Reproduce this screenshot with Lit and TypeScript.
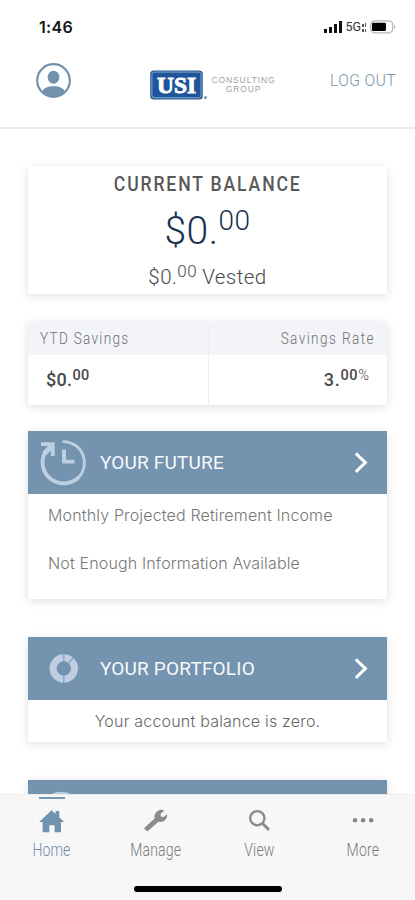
import { LitElement, html, css, svg } from "lit";
import { customElement, property } from "lit/decorators.js";

const chevron = html`<svg class="chevron" viewBox="0 0 14 22" width="14" height="22">
  <path d="M1.8 1.3 L11.4 10.6 L1.8 19.9" fill="none" stroke="#fff" stroke-width="3" />
</svg>`;

const tabIcons: Record<string, unknown> = {
  Home: svg`<path d="M12.5 1.2 L16.5 4.9 V2 H20.3 V8.4 L25.2 13 H22 V23.2 H15.6 V16.3 H10.3 V23.2 H3.6 V13 H.2 Z" fill="#7193b0"/>`,
  Manage: svg`<path d="M4.4 22.6 L1 19.3 L11.6 9.6 C10.7 5.2 14 .9 18.6 .8 C19.8 .8 20.7 1.1 21.3 1.5 L17.5 4.9 L17.9 7.6 L20.6 8.1 L24.1 5.2 C24.7 9.9 20.7 13.8 15.3 12.8 Z" fill="#8b8b8b"/>`,
  View: svg`<circle cx="10.3" cy="9.2" r="7.1" fill="none" stroke="#8b8b8b" stroke-width="2.4"/><path d="M15.3 14.2 L22 20.9" stroke="#8b8b8b" stroke-width="2.9"/>`,
  More: svg`<circle cx="4" cy="11.3" r="2.2" fill="#858585"/><circle cx="12.1" cy="11.3" r="2.2" fill="#858585"/><circle cx="20.2" cy="11.3" r="2.2" fill="#858585"/>`,
};

@customElement("info-panel")
class InfoPanel extends LitElement {
  @property() heading = "";
  static styles = css`
    :host { display: block; background: #fff; box-shadow: 0 2px 9px rgba(0, 0, 0, 0.13); }
    .bar { height: 63px; display: flex; align-items: center; background: #7493ae; color: #f7f9fb; padding-right: 19px; }
    .icon { width: 72px; height: 63px; }
    .title { flex: 1; font: 400 19px/24px Roboto, sans-serif; letter-spacing: 0.18px; white-space: nowrap; }
    .chevron { display: block; }
  `;
  render() {
    return html`<div class="bar">
        <div class="icon"><slot name="icon"></slot></div>
        <div class="title">${this.heading}</div>
        ${this.heading ? chevron : ""}
      </div>
      <slot></slot>`;
  }
}

@customElement("app-root")
class AppRoot extends LitElement {
  static styles = css`
    :host { display: flex; flex-direction: column; height: 900px; overflow: hidden; background: #fff; font-family: Roboto, "Liberation Sans", sans-serif; color: #606060; }
    * { box-sizing: border-box; }
    svg { display: block; }
    .text { display: inline-block; white-space: nowrap; }
    .left { transform-origin: left; }
    .right { transform-origin: right; }
    .status { height: 54px; flex: none; display: flex; justify-content: space-between; align-items: center; padding: 0 19px 0 39px; color: #161616; }
    .time { font: 600 16px/20px Inter, sans-serif; letter-spacing: 0.3px; }
    .signals { display: flex; align-items: center; gap: 3px; }
    .net { font: 400 12.5px/14px Roboto, sans-serif; color: #333; display: flex; align-items: center; gap: 1px; }
    .topbar { height: 75px; flex: none; display: flex; border-bottom: 2px solid #ebebeb; padding: 8px 19px 0 36px; }
    .brand { display: flex; margin: 8px 0 0 78px; }
    .group { font: 400 8.5px/9px "Liberation Sans", sans-serif; letter-spacing: 0.9px; text-align: center; color: #a0a0a0; margin: 6px 0 0 3px; width: 65px; white-space: nowrap; }
    .logout { margin-left: auto; font-size: 17px; line-height: 20px; margin-top: 8px; color: #7a93a8; font-weight: 300; }
    .logout .text { letter-spacing: 0.35px; transform: scaleX(0.93); }
    main { flex: 1; min-height: 0; overflow: hidden; padding: 37px 28px 0; }
    .card { background: #fff; box-shadow: 0 2px 9px rgba(0, 0, 0, 0.13); }
    .balance { height: 128px; margin-bottom: 28px; text-align: center; }
    .label { height: 36px; padding-top: 6px; font-size: 20px; line-height: 24px; font-weight: 500; color: #595959; }
    .label .text { letter-spacing: 2.1px; transform: scaleX(0.88); margin-right: -1px; }
    .super { display: flex; justify-content: center; }
    .amount { font-size: 39px; line-height: 44px; font-weight: 300; color: #17334f; padding-top: 7px; height: 60px; letter-spacing: 0.5px; }
    .amount .cents { font-size: 28px; line-height: 26px; margin-top: -1px; }
    .vested { font-size: 20.5px; line-height: 24px; font-weight: 300; color: #484848; padding-top: 3px; letter-spacing: 0.45px; }
    .vested .cents { font-size: 17px; line-height: 18px; margin: -3px 5px 0 0; }
    .savings { height: 83px; margin-bottom: 26px; display: grid; grid-template-columns: 180px 1fr; }
    .cell + .cell { border-left: 1px solid #edeff2; text-align: right; }
    .head { height: 33px; background: #f2f4f8; padding: 5px 12px; font-size: 16px; line-height: 24px; color: #707070; font-weight: 300; }
    .head .text { letter-spacing: 1.5px; transform: scaleX(0.85); }
    .cell + .cell .head .text { letter-spacing: 1.65px; }
    .value { display: flex; padding: 13px 18px; font-size: 18px; line-height: 24px; font-weight: 500; color: #484848; letter-spacing: 0.3px; }
    .cell + .cell .value { justify-content: flex-end; letter-spacing: 0.7px; }
    .value .cents { font-size: 14.5px; line-height: 16px; margin-top: 0; }
    .pct { font-weight: 300; letter-spacing: 0; }
    .future { height: 168px; margin-bottom: 38px; }
    .lines { padding: 9px 20px; font: 300 16px/24px Inter, sans-serif; letter-spacing: 0.15px; color: #777; display: flex; flex-direction: column; gap: 24px; }
    .portfolio { height: 105px; margin-bottom: 38px; }
    .zero { text-align: center; font: 300 16px/24px Inter, sans-serif; letter-spacing: 0.2px; color: #666; padding-top: 9px; }
    nav { position: relative; height: 106px; flex: none; background: #f7f7f7; border-top: 1px solid #ececec; display: grid; grid-template-columns: repeat(4, 1fr); padding-top: 14px; }
    .tab { text-align: center; font-size: 18px; font-weight: 300; line-height: 24px; color: #7a7a7a; }
    .tab svg { margin: 0 auto; }
    .tab .text { transform: scaleX(0.78); letter-spacing: 0.2px; margin-top: 5px; }
    .tab.active { color: #6b8ba8; position: relative; }
    .mark { position: absolute; top: -12px; left: 39px; width: 26px; height: 2px; background: #7997b0; }
    .homebar { position: absolute; bottom: 8px; left: 134px; width: 148px; height: 6px; border-radius: 3px; background: #000; }
  `;

  render() {
    return html`
      <div class="status">
        <div class="time">1:46</div>
        <div class="signals">
          <svg width="18" height="12"><path d="M0 8h3v4H0zM5 6h3v6H5zM10 3h3v9h-3zM15 0h3v12h-3z" fill="#111" /></svg>
          <div class="net">5G<svg width="5" height="9"><path d="M0 1h2v3H0zM3 0h1v4H3zM0 6h2v3H0zM3 6h1v3H3z" fill="#555" /></svg></div>
          <svg width="26" height="14"><rect x=".7" y=".8" width="22" height="12" rx="4" fill="#fff" stroke="#b5b5b5" stroke-width="1.2" /><rect x="2" y="2.8" width="14" height="8.2" rx="1.3" fill="#000" /><path d="M24 4.5q2 2.4 0 4.8z" fill="#aaa" /></svg>
        </div>
      </div>
      <div class="topbar">
        <svg width="36" height="36" viewBox="0 0 36 36">
          <defs><clipPath id="face"><circle cx="17.5" cy="18.5" r="16" /></clipPath></defs>
          <circle cx="17.5" cy="18.5" r="16.3" fill="#fff" stroke="#7191ad" stroke-width="2.2" />
          <ellipse cx="17.5" cy="15.2" rx="5.8" ry="6.5" fill="#7191ad" />
          <path clip-path="url(#face)" d="M4 36 C5 27 10 24.3 17.5 24.3 S30 27 31 36Z" fill="#7191ad" />
        </svg>
        <div class="brand">
          <svg width="58" height="31" viewBox="0 0 58 31">
            <rect x=".2" y=".4" width="52.6" height="29" rx="3.5" fill="#2b5c95" />
            <rect x="1.9" y="2.1" width="49.2" height="25.6" rx="2.5" fill="#1f559b" stroke="#7fa8cb" stroke-width="1" />
            <text x="26.5" y="22.6" text-anchor="middle" font-family="Liberation Serif, serif" font-weight="700" font-size="24" textLength="39" lengthAdjust="spacingAndGlyphs" fill="#fff" stroke="#fff" stroke-width=".9">USI</text>
            <circle cx="55.5" cy="27.6" r="1.6" fill="#7e9bb8" />
          </svg>
          <div class="group">CONSULTING<br />GROUP</div>
        </div>
        <div class="logout"><span class="text right">LOG OUT</span></div>
      </div>
      <main>
        <div class="card balance">
          <div class="label"><span class="text">CURRENT BALANCE</span></div>
          <div class="super amount"><span>$0.</span><span class="cents">00</span></div>
          <div class="super vested"><span>$0.</span><span class="cents">00</span><span>Vested</span></div>
        </div>
        <div class="card savings">
          <div class="cell">
            <div class="head"><span class="text left">YTD Savings</span></div>
            <div class="value"><span>$0.</span><span class="cents">00</span></div>
          </div>
          <div class="cell">
            <div class="head"><span class="text right">Savings Rate</span></div>
            <div class="value"><span>3.</span><span class="cents">00<span class="pct">%</span></span></div>
          </div>
        </div>
        <info-panel class="future" heading="YOUR FUTURE">
          <svg slot="icon" width="72" height="63" viewBox="0 0 72 63" fill="none" stroke="#bdd0e2">
            <path d="M34.5 10.6 A21.2 21.2 0 0 1 50.5 46.5" stroke-width="2.8" />
            <path d="M50.8 46.2 A21.2 21.2 0 0 1 17.5 20.5" stroke-width="3.8" />
            <path d="M13 13.2 H24.8 V25" stroke-width="3.8" />
            <path d="M24.5 14 L16.5 22.5" stroke-width="5" />
            <path d="M36 18.5 V30.7 H46.5" stroke-width="3.8" />
          </svg>
          <div class="lines"><span>Monthly Projected Retirement Income</span><span>Not Enough Information Available</span></div>
        </info-panel>
        <info-panel class="portfolio" heading="YOUR PORTFOLIO">
          <svg slot="icon" width="72" height="63" viewBox="0 0 72 63" fill="none">
            <circle cx="35.8" cy="31.5" r="10.7" stroke="#bfcee0" stroke-width="7" />
            <path d="M35.8 17v8M35.8 38v8M40.5 26 L46 20" stroke="#819db7" stroke-width="1.2" />
          </svg>
          <div class="zero">Your account balance is zero.</div>
        </info-panel>
        <info-panel>
          <svg slot="icon" width="72" height="63" viewBox="0 0 72 63"><circle cx="33" cy="32.5" r="19.5" fill="none" stroke="#bdd0e2" stroke-width="2.5" /></svg>
        </info-panel>
      </main>
      <nav>
        ${["Home", "Manage", "View", "More"].map(
          (name) => html`<div class="tab ${name === "Home" ? "active" : ""}">
            ${name === "Home" ? html`<div class="mark"></div>` : ""}
            <svg width="25" height="24" viewBox="0 0 25 24">${tabIcons[name]}</svg>
            <span class="text">${name}</span>
          </div>`
        )}
        <div class="homebar"></div>
      </nav>
    `;
  }
}
